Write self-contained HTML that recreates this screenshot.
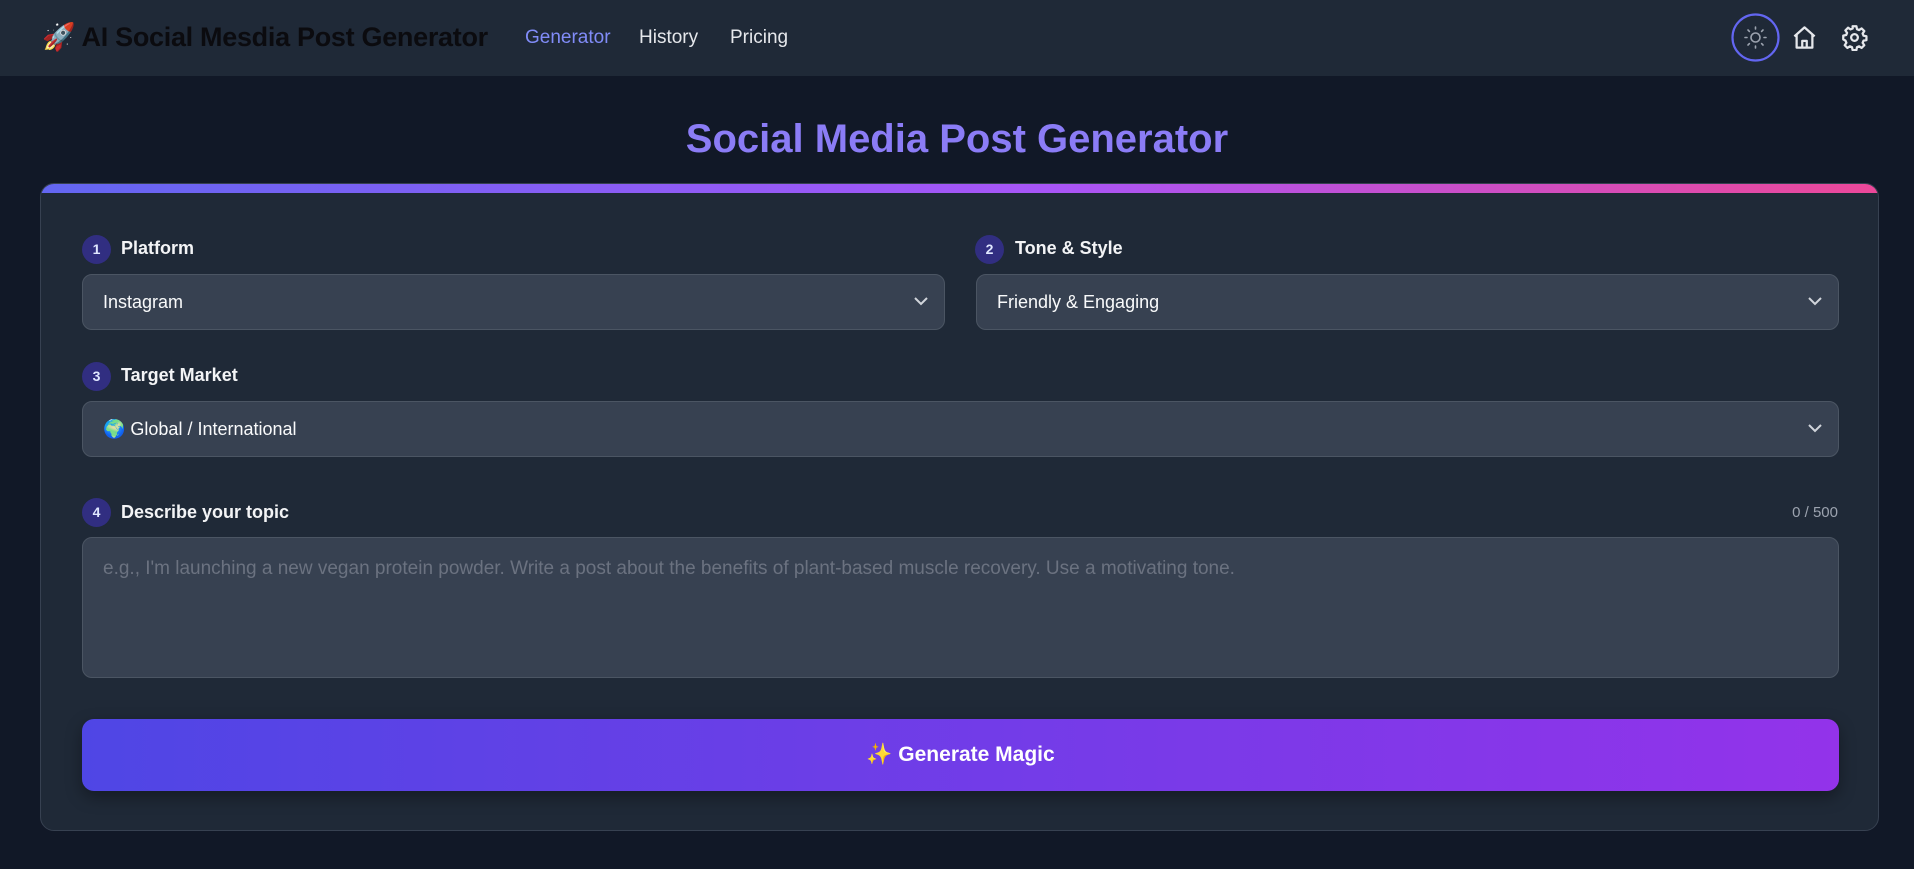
<!DOCTYPE html>
<html><head><meta charset="utf-8"><style>
*{box-sizing:border-box;margin:0;padding:0}
body{width:1914px;height:869px;background:#111827;font-family:"Liberation Sans","DejaVu Sans",sans-serif;color:#f3f4f6;position:relative;overflow:hidden}
.hdr{position:absolute;left:0;top:0;width:1914px;height:76px;background:#1f2937}
.logo{position:absolute;left:42px;top:21px;font-size:27px;font-weight:bold;color:#0b0b0f;white-space:nowrap;letter-spacing:-0.3px}
.nav{position:absolute;top:27px;font-size:19px;color:#e5e7eb}
.title{position:absolute;top:117px;left:0;width:1914px;text-align:center;font-size:40px;font-weight:bold;color:#8b7cf6}
.card{position:absolute;left:40px;top:183px;width:1839px;height:648px;background:#1f2937;border:1px solid #374151;border-radius:14px;overflow:hidden}
.bar{position:absolute;left:0;top:0;width:100%;height:9px;background:linear-gradient(90deg,#6366f1,#a855f7 55%,#ec4899)}
.badge{position:absolute;width:29px;height:29px;border-radius:50%;background:#312e81;color:#e0e7ff;font-size:14px;font-weight:bold;text-align:center;line-height:29px}
.lbl{position:absolute;font-size:18px;font-weight:bold;color:#f3f4f6}
.sel{position:absolute;height:56px;background:#374151;border:1px solid #4b5563;border-radius:10px;font-size:18px;color:#f9fafb;padding-left:20px;line-height:54px}
.sel svg{position:absolute;right:14px;top:20px}
</style></head><body>
<div class="hdr">
<div class="logo">🚀 AI Social Mesdia Post Generator</div>
<div class="nav" style="left:525px;color:#818cf8">Generator</div>
<div class="nav" style="left:639px">History</div>
<div class="nav" style="left:730px">Pricing</div>
<svg style="position:absolute;left:1731px;top:13px" width="49" height="49" viewBox="0 0 49 49"><circle cx="24.5" cy="24.5" r="23" fill="none" stroke="#6366f1" stroke-width="2.2"/><g stroke="#9ca3af" stroke-width="1.6" fill="none" stroke-linecap="round"><circle cx="24.5" cy="24.5" r="4.5"/><path d="M24.5 14v2M24.5 33v2M14 24.5h2M33 24.5h2M17 17l1.4 1.4M30.6 30.6l1.4 1.4M17 32l1.4-1.4M30.6 18.4l1.4-1.4"/></g></svg>
<svg style="position:absolute;left:1791px;top:24px" width="27" height="27" viewBox="0 0 24 24" fill="none" stroke="#e5e7eb" stroke-width="2" stroke-linejoin="round"><path d="M3 11l9-8 9 8M5 9.5V21h14V9.5M10 21v-6h4v6"/></svg>
<svg style="position:absolute;left:1841px;top:24px" width="27" height="27" viewBox="0 0 24 24" fill="none" stroke="#e5e7eb" stroke-width="2" stroke-linejoin="round"><path d="M10.3 2h3.4l.5 2.6 1.9.8 2.2-1.5 2.4 2.4-1.5 2.2.8 1.9 2.6.5v3.4l-2.6.5-.8 1.9 1.5 2.2-2.4 2.4-2.2-1.5-1.9.8-.5 2.6h-3.4l-.5-2.6-1.9-.8-2.2 1.5-2.4-2.4 1.5-2.2-.8-1.9L2 13.7v-3.4l2.6-.5.8-1.9-1.5-2.2 2.4-2.4 2.2 1.5 1.9-.8z"/><circle cx="12" cy="12" r="3"/></svg>
</div>
<div class="title">Social Media Post Generator</div>
<div class="card">
<div class="bar"></div>
<div class="badge" style="left:41px;top:51px">1</div><div class="lbl" style="left:80px;top:54px">Platform</div>
<div class="badge" style="left:934px;top:51px">2</div><div class="lbl" style="left:974px;top:54px">Tone &amp; Style</div>
<div class="sel" style="left:41px;top:90px;width:863px">Instagram<svg width="18" height="12" viewBox="0 0 18 12"><path d="M3 3l6 6 6-6" stroke="#d1d5db" stroke-width="2" fill="none"/></svg></div>
<div class="sel" style="left:935px;top:90px;width:863px">Friendly &amp; Engaging<svg width="18" height="12" viewBox="0 0 18 12"><path d="M3 3l6 6 6-6" stroke="#d1d5db" stroke-width="2" fill="none"/></svg></div>
<div class="badge" style="left:41px;top:178px">3</div><div class="lbl" style="left:80px;top:181px">Target Market</div>
<div class="sel" style="left:41px;top:217px;width:1757px">🌍 Global / International<svg width="18" height="12" viewBox="0 0 18 12"><path d="M3 3l6 6 6-6" stroke="#d1d5db" stroke-width="2" fill="none"/></svg></div>
<div class="badge" style="left:41px;top:314px">4</div><div class="lbl" style="left:80px;top:318px">Describe your topic</div>
<div style="position:absolute;right:40px;top:320px;font-size:15px;color:#9ca3af">0 / 500</div>
<div class="sel" style="left:41px;top:353px;width:1757px;height:141px;line-height:normal;padding-top:20px;color:#6b7280;font-size:19px">e.g., I'm launching a new vegan protein powder. Write a post about the benefits of plant-based muscle recovery. Use a motivating tone.</div>
<div style="position:absolute;left:41px;top:535px;width:1757px;height:72px;border-radius:12px;background:linear-gradient(90deg,#4f46e5,#9333ea);box-shadow:0 6px 16px rgba(0,0,0,.35);text-align:center;line-height:72px;font-size:21px;font-weight:bold;color:#fff">✨ Generate Magic</div>
</div>
</body></html>
